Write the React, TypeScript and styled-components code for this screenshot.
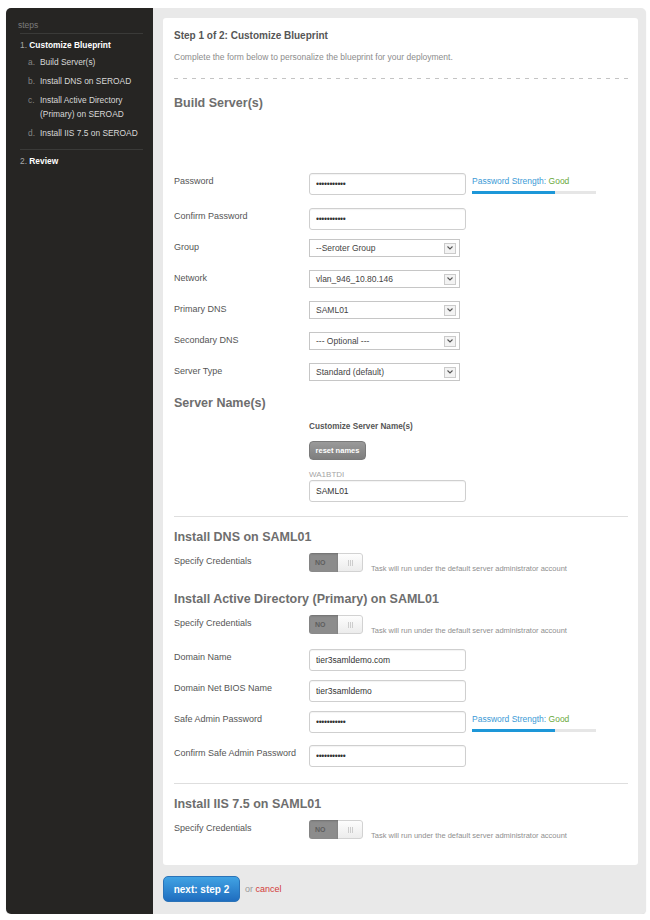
import React from 'react';
import styled, { createGlobalStyle } from 'styled-components';

const GlobalStyle = createGlobalStyle`
  html, body {
    margin: 0;
    padding: 0;
    background: #fff;
  }
  body {
    font-family: 'Liberation Sans', Arial, sans-serif;
  }
`;

const Frame = styled.div`
  display: flex;
  margin: 8px 0 0 6px;
  width: 640px;
  height: 906px;
  background: #e9e9e9;
  border-radius: 5px;
  box-shadow: 0 1px 1px rgba(0, 0, 0, 0.12);
`;

/* ---------- sidebar ---------- */

const Sidebar = styled.nav`
  width: 147px;
  flex-shrink: 0;
  box-sizing: border-box;
  padding: 11px 10px 0 12px;
  background: #262523;
  border-radius: 5px 0 0 5px;
`;

const StepsTitle = styled.div`
  font-size: 8.5px;
  line-height: 12px;
  color: #7b7b7b;
  padding-bottom: 2px;
`;

const SideDivider = styled.div<{ $mt?: number }>`
  height: 1px;
  margin: ${({ $mt }) => $mt ?? 0}px 0 0 2px;
  background: #3a3a38;
`;

const StepMain = styled.div<{ $mt: number }>`
  margin: ${({ $mt }) => $mt}px 0 0 2px;
  font-size: 8.4px;
  line-height: 14px;
  font-weight: bold;
  color: #fff;
`;

const StepNum = styled.span`
  font-weight: normal;
  color: #a8a8a8;
`;

const SubList = styled.ul`
  list-style: none;
  margin: 3px 0 0 10px;
  padding: 0;
  display: flex;
  flex-direction: column;
  gap: 5px;
`;

const SubItem = styled.li`
  display: flex;
  font-size: 8.4px;
  line-height: 14px;
  color: #d8d8d8;
`;

const SubLetter = styled.span`
  width: 12px;
  flex-shrink: 0;
  color: #858585;
`;

/* ---------- main ---------- */

const Main = styled.main`
  flex: 1;
  padding: 10px 8px 0 10px;
  display: flex;
  flex-direction: column;
`;

const Card = styled.section`
  background: #fff;
  border-radius: 3px;
  padding: 11px 10px 23px 11px;
`;

const Title = styled.h1`
  margin: 0;
  font-size: 10px;
  line-height: 14px;
  font-weight: bold;
  color: #565656;
`;

const Description = styled.p`
  margin: 8px 0 0;
  font-size: 8.5px;
  line-height: 12px;
  color: #8c8c8c;
`;

const DashedRule = styled.div`
  height: 1px;
  margin-top: 15px;
  background: repeating-linear-gradient(to right, #c4c4c4 0 4px, transparent 4px 9px);
`;

const SolidRule = styled.div<{ $mt: number }>`
  height: 1px;
  margin: ${({ $mt }) => $mt}px 0 11px;
  background: #dedede;
`;

const SectionHeading = styled.h2<{ $mt?: number; $mb?: number }>`
  margin: ${({ $mt }) => $mt ?? 0}px 0 ${({ $mb }) => $mb ?? 8}px;
  padding-top: 1px;
  font-size: 12.5px;
  line-height: 16px;
  font-weight: bold;
  color: #6e6e6e;
`;

const Row = styled.div<{ $mb?: number }>`
  display: flex;
  align-items: flex-start;
  min-height: 22px;
  margin-bottom: ${({ $mb }) => $mb ?? 9}px;
`;

const Label = styled.label`
  width: 135px;
  flex-shrink: 0;
  font-size: 9px;
  line-height: 16px;
  color: #555;
`;

const Field = styled.div`
  display: flex;
  flex-direction: column;
`;

const TextInput = styled.input`
  box-sizing: border-box;
  width: 157px;
  height: 22px;
  margin: 0;
  padding: 0 6px;
  border: 1px solid #cfcfcf;
  border-radius: 3px;
  box-shadow: inset 0 1px 1px rgba(0, 0, 0, 0.05);
  font-family: 'Liberation Sans', Arial, sans-serif;
  font-size: 8.5px;
  color: #333;
  background: #fff;
  outline: none;

  &[type='password'] {
    letter-spacing: -0.3px;
  }
`;

const SelectBox = styled.div`
  box-sizing: border-box;
  width: 151px;
  height: 18px;
  display: flex;
  align-items: center;
  padding: 0 3px 0 6px;
  border: 1px solid #c6c6c6;
  background: #fff;
  font-size: 8.5px;
  color: #444;
`;

const SelectArrow = styled.span`
  box-sizing: border-box;
  width: 12px;
  height: 11px;
  margin-left: auto;
  display: flex;
  align-items: center;
  justify-content: center;
  border: 1px solid #cbcbcb;
  background: #f3f3f3;
`;

const Strength = styled.div`
  margin-left: 6px;
  width: 124px;
`;

const StrengthText = styled.div`
  font-size: 8.5px;
  line-height: 16px;
  color: #3b9ad6;
`;

const StrengthGood = styled.span`
  color: #6aa83a;
`;

const StrengthBar = styled.div`
  height: 3px;
  margin-top: 2px;
  background: #e6e6e6;
`;

const StrengthFill = styled.div`
  height: 100%;
  background: #1d97d8;
`;

const SubLabel = styled.div`
  font-size: 8.2px;
  line-height: 12px;
  font-weight: bold;
  color: #555;
`;

const ResetButton = styled.button`
  box-sizing: border-box;
  width: 57px;
  height: 19px;
  margin-top: 8px;
  padding: 0;
  border: 1px solid #7a7a7a;
  border-radius: 4px;
  background: linear-gradient(#9a9a9a, #7e7e7e);
  font-family: 'Liberation Sans', Arial, sans-serif;
  font-size: 7.5px;
  font-weight: bold;
  color: #fff;
`;

const ServerId = styled.div`
  margin-top: 10px;
  font-size: 8px;
  line-height: 10px;
  color: #a5a5a5;
`;

const Toggle = styled.div`
  display: flex;
  width: 54px;
  height: 19px;
  border-radius: 3px;
  overflow: hidden;
  box-sizing: border-box;
`;

const ToggleOff = styled.span`
  width: 29px;
  display: flex;
  align-items: center;
  padding-left: 6px;
  box-sizing: border-box;
  background: #8c8c8c;
  box-shadow: inset 0 1px 2px rgba(0, 0, 0, 0.2);
  font-size: 7px;
  font-weight: bold;
  color: #5e5e5e;
`;

const ToggleKnob = styled.span`
  flex: 1;
  display: flex;
  align-items: center;
  justify-content: center;
  border: 1px solid #d2d2d2;
  border-left: none;
  border-radius: 0 3px 3px 0;
  background: linear-gradient(#fdfdfd, #ececec);
`;

const Grip = styled.span`
  width: 5px;
  height: 6px;
  background: repeating-linear-gradient(to right, #cdcdcd 0 1px, transparent 1px 2px);
`;

const TaskNote = styled.span`
  margin-left: 8px;
  padding-top: 11px;
  font-size: 7.5px;
  line-height: 10px;
  color: #8f8f8f;
`;

const Footer = styled.div`
  display: flex;
  align-items: center;
  margin-top: 11px;
`;

const NextButton = styled.button`
  box-sizing: border-box;
  width: 77px;
  height: 26px;
  padding: 0;
  border: 1px solid #2b73b8;
  border-radius: 5px;
  background: linear-gradient(#41a3e4, #1f6dbf);
  font-family: 'Liberation Sans', Arial, sans-serif;
  font-size: 10px;
  font-weight: bold;
  color: #fff;
`;

const FooterText = styled.span`
  margin-left: 5px;
  font-size: 9px;
  color: #9a9a9a;
`;

const CancelLink = styled.a`
  color: #d23a3a;
  text-decoration: none;
`;

/* ---------- pieces ---------- */

const Chevron = () => (
  <svg width="6" height="4" viewBox="0 0 6 4">
    <path d="M0.5 0.5 L3 3 L5.5 0.5" fill="none" stroke="#555" strokeWidth="1.1" />
  </svg>
);

const Select: React.FC<{ value: string }> = ({ value }) => (
  <SelectBox>
    {value}
    <SelectArrow>
      <Chevron />
    </SelectArrow>
  </SelectBox>
);

const PasswordStrength = () => (
  <Strength>
    <StrengthText>
      Password Strength: <StrengthGood>Good</StrengthGood>
    </StrengthText>
    <StrengthBar>
      <StrengthFill style={{ width: '67%' }} />
    </StrengthBar>
  </Strength>
);

const CredentialsRow: React.FC<{ mb?: number }> = ({ mb }) => (
  <Row $mb={mb}>
    <Label>Specify Credentials</Label>
    <Toggle>
      <ToggleOff>NO</ToggleOff>
      <ToggleKnob>
        <Grip />
      </ToggleKnob>
    </Toggle>
    <TaskNote>Task will run under the default server administrator account</TaskNote>
  </Row>
);

const selects = [
  { label: 'Group', value: '--Seroter Group' },
  { label: 'Network', value: 'vlan_946_10.80.146' },
  { label: 'Primary DNS', value: 'SAML01' },
  { label: 'Secondary DNS', value: '--- Optional ---' },
  { label: 'Server Type', value: 'Standard (default)' },
];

const subSteps = [
  { letter: 'a.', text: 'Build Server(s)' },
  { letter: 'b.', text: 'Install DNS on SEROAD' },
  { letter: 'c.', text: 'Install Active Directory (Primary) on SEROAD' },
  { letter: 'd.', text: 'Install IIS 7.5 on SEROAD' },
];

const App: React.FC = () => (
  <>
    <GlobalStyle />
    <Frame>
      <Sidebar>
        <StepsTitle>steps</StepsTitle>
        <SideDivider />
        <StepMain $mt={4}>
          <StepNum>1. </StepNum>Customize Blueprint
        </StepMain>
        <SubList>
          {subSteps.map((s) => (
            <SubItem key={s.letter}>
              <SubLetter>{s.letter}</SubLetter>
              <span>{s.text}</span>
            </SubItem>
          ))}
        </SubList>
        <SideDivider $mt={9} />
        <StepMain $mt={4}>
          <StepNum>2. </StepNum>Review
        </StepMain>
      </Sidebar>

      <Main>
        <Card>
          <Title>Step 1 of 2: Customize Blueprint</Title>
          <Description>
            Complete the form below to personalize the blueprint for your deployment.
          </Description>
          <DashedRule />

          <SectionHeading $mt={15} $mb={62}>Build Server(s)</SectionHeading>

          <Row $mb={13}>
            <Label>Password</Label>
            <TextInput type="password" defaultValue="abcdefghijk" readOnly />
            <PasswordStrength />
          </Row>
          <Row>
            <Label>Confirm Password</Label>
            <TextInput type="password" defaultValue="abcdefghijk" readOnly />
          </Row>
          {selects.map((s) => (
            <Row key={s.label}>
              <Label>{s.label}</Label>
              <Select value={s.value} />
            </Row>
          ))}

          <SectionHeading $mt={2} $mb={10}>Server Name(s)</SectionHeading>
          <Row $mb={0}>
            <Label />
            <Field>
              <SubLabel>Customize Server Name(s)</SubLabel>
              <div>
                <ResetButton>reset names</ResetButton>
              </div>
              <ServerId>WA1BTDI</ServerId>
              <TextInput defaultValue="SAML01" readOnly />
            </Field>
          </Row>

          <SolidRule $mt={14} />
          <SectionHeading>Install DNS on SAML01</SectionHeading>
          <CredentialsRow mb={15} />

          <SectionHeading>Install Active Directory (Primary) on SAML01</SectionHeading>
          <CredentialsRow mb={12} />
          <Row>
            <Label>Domain Name</Label>
            <TextInput defaultValue="tier3samldemo.com" readOnly />
          </Row>
          <Row>
            <Label>Domain Net BIOS Name</Label>
            <TextInput defaultValue="tier3samldemo" readOnly />
          </Row>
          <Row $mb={12}>
            <Label>Safe Admin Password</Label>
            <TextInput type="password" defaultValue="abcdefghijk" readOnly />
            <PasswordStrength />
          </Row>
          <Row $mb={0}>
            <Label>Confirm Safe Admin Password</Label>
            <TextInput type="password" defaultValue="abcdefghijk" readOnly />
          </Row>

          <SolidRule $mt={16} />
          <SectionHeading $mt={3}>Install IIS 7.5 on SAML01</SectionHeading>
          <CredentialsRow mb={0} />
        </Card>

        <Footer>
          <NextButton>next: step 2</NextButton>
          <FooterText>
            or <CancelLink href="#">cancel</CancelLink>
          </FooterText>
        </Footer>
      </Main>
    </Frame>
  </>
);

export default App;
